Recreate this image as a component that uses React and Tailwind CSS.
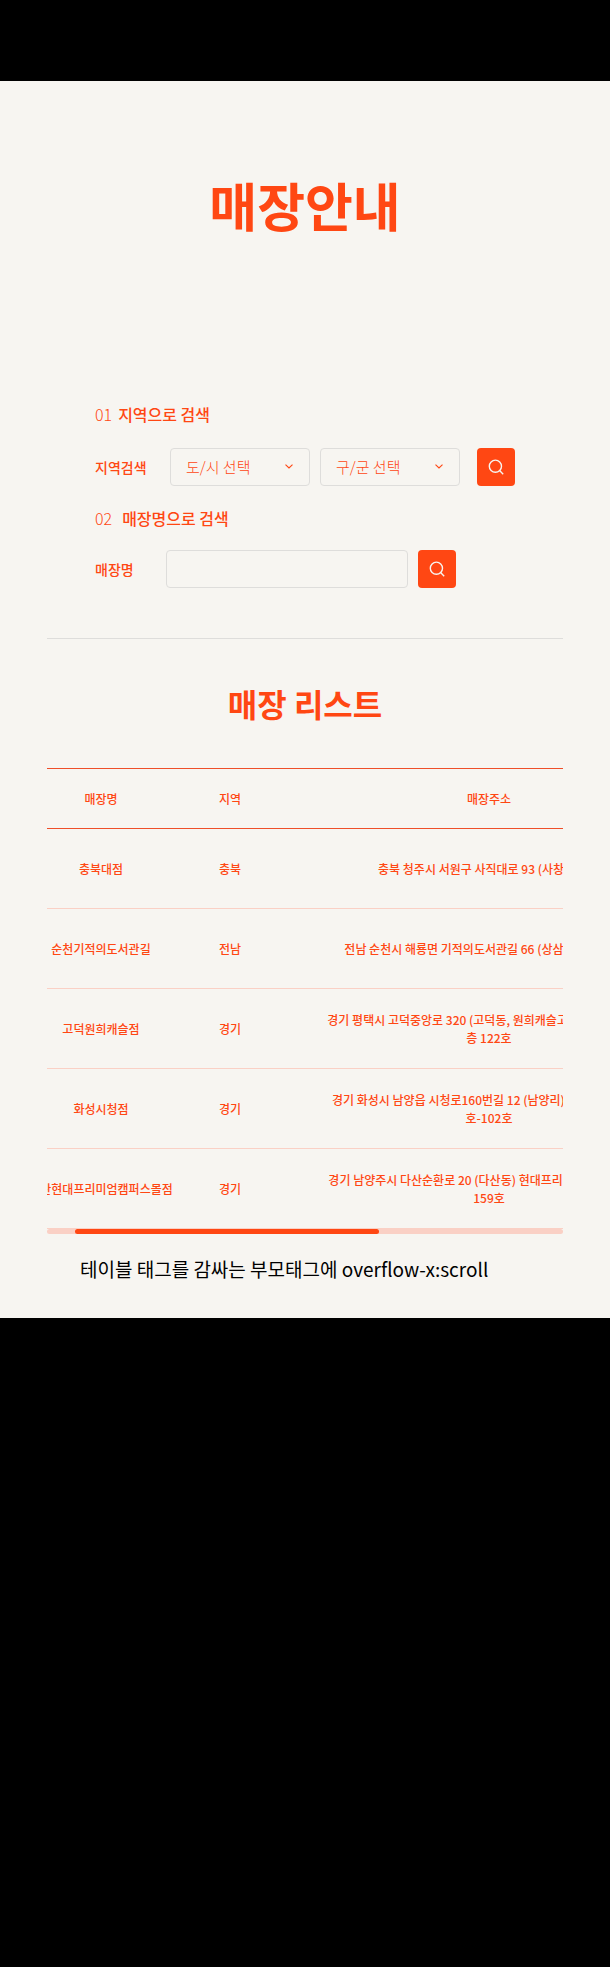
import { useLayoutEffect, useRef, useState } from "react";

const STORES = [
  { name: "충북대점", region: "충북", address: ["충북 청주시 서원구 사직대로 93 (사창동) 1층"], phone: "043-271-0093" },
  { name: "순천기적의도서관길", region: "전남", address: ["전남 순천시 해룡면 기적의도서관길 66 (상삼리) 1층 103호"], phone: "061-721-0066" },
  { name: "고덕원희캐슬점", region: "경기", address: ["경기 평택시 고덕중앙로 320 (고덕동, 원희캐슬고덕) 상가동 지상1", "층 122호"], phone: "031-611-0320" },
  { name: "화성시청점", region: "경기", address: ["경기 화성시 남양읍 시청로160번길 12 (남양리) 센트럴타워 101", "호-102호"], phone: "031-355-0160" },
  { name: "다산현대프리미엄캠퍼스몰점", region: "경기", address: ["경기 남양주시 다산순환로 20 (다산동) 현대프리미엄캠퍼스몰 1층", "159호"], phone: "031-555-0159" },
];

function SearchIcon() {
  return (
    <svg viewBox="0 0 16 16" className="size-4" fill="none" stroke="currentColor" strokeWidth="1.4" aria-hidden="true">
      <circle cx="7.4" cy="7.2" r="6.1" />
      <path d="M11.6 11.6 L15.2 15.2" />
    </svg>
  );
}

function SearchButton({ label }) {
  return (
    <button type="submit" aria-label={label} className="flex size-[38px] shrink-0 items-center justify-center rounded-[4px] bg-[#ff4713] text-[#f7f5f1]">
      <SearchIcon />
    </button>
  );
}

function Picker({ label, text }) {
  return (
    <div className="relative w-[140px]">
      <select aria-label={label} className="h-[38px] w-full appearance-none rounded-[4px] border border-[#dedddb] bg-transparent px-[15px] text-[15px] font-light">
        <option>{text}</option>
      </select>
      <svg viewBox="0 0 8 5" className="pointer-events-none absolute top-4 right-[17px] h-[5px] w-2" fill="none" stroke="currentColor" strokeWidth="1.1" aria-hidden="true">
        <path d="M0.5 0.6 L4 4 L7.5 0.6" />
      </svg>
    </div>
  );
}

function ScrollTable() {
  const box = useRef(null);
  const [bar, setBar] = useState({ left: 0, width: 100 });

  const update = () => {
    const el = box.current;
    setBar({ left: (el.scrollLeft / el.scrollWidth) * 100, width: (el.clientWidth / el.scrollWidth) * 100 });
  };

  useLayoutEffect(() => {
    box.current.scrollLeft = 48;
    update();
    window.addEventListener("resize", update);
    return () => window.removeEventListener("resize", update);
  }, []);

  const head = "h-[61px] border-y border-[#ee4f2a] font-medium";
  const cell = "h-20 border-b border-[#fad0c5]";

  return (
    <div>
      <div ref={box} onScroll={update} className="overflow-x-auto [scrollbar-width:none]">
        <table className="w-full min-w-[876px] table-fixed border-separate border-spacing-0 text-center text-xs leading-[18px] font-medium">
          <colgroup>
            <col className="w-[204px]" />
            <col className="w-[54px]" />
            <col className="w-[464px]" />
            <col />
          </colgroup>
          <thead>
            <tr>
              <th className={head}>매장명</th>
              <th className={head}>지역</th>
              <th className={head}>매장주소</th>
              <th className={head}>전화번호</th>
            </tr>
          </thead>
          <tbody>
            {STORES.map((s) => (
              <tr key={s.name}>
                <td className={cell}>{s.name}</td>
                <td className={cell}>{s.region}</td>
                <td className={cell}>
                  {s.address.map((line) => (
                    <span key={line} className="block">{line}</span>
                  ))}
                </td>
                <td className={cell}>{s.phone}</td>
              </tr>
            ))}
          </tbody>
        </table>
      </div>
      <div className="h-[5px] overflow-hidden rounded-full bg-[#fad0c5]">
        <div className="h-full rounded-full bg-[#ff4713]" style={{ marginLeft: `${bar.left}%`, width: `${bar.width}%` }} />
      </div>
    </div>
  );
}

export default function App() {
  const stop = (e) => e.preventDefault();
  return (
    <div className="min-h-screen bg-black pt-[81px] font-['Noto_Sans_CJK_KR',sans-serif]">
      <main className="bg-[#f7f5f1] px-[47px] pt-[88px] pb-[33px] text-[#ff4713]">
        <h1 className="text-center text-[52px] leading-[72px] font-bold">매장안내</h1>

        <section className="border-b border-[#dedddb] px-12 pt-[161px] pb-[50px]">
          <h2 className="flex gap-[6px] text-base leading-6 font-medium">
            <span className="font-light">01</span>지역으로 검색
          </h2>
          <form onSubmit={stop} className="mt-[22px] flex items-center">
            <span className="w-[75px] text-sm font-medium">지역검색</span>
            <div className="flex gap-[10px]">
              <Picker label="도/시" text="도/시 선택" />
              <Picker label="구/군" text="구/군 선택" />
            </div>
            <div className="ml-[17px]">
              <SearchButton label="지역으로 검색" />
            </div>
          </form>
          <h2 className="mt-5 flex gap-[10px] text-base leading-6 font-medium">
            <span className="font-light">02</span>매장명으로 검색
          </h2>
          <form onSubmit={stop} className="mt-5 flex items-center">
            <label htmlFor="store" className="w-[71px] text-sm font-medium">매장명</label>
            <input id="store" type="text" className="mr-[10px] h-[38px] w-[242px] rounded-[4px] border border-[#dedddb] bg-transparent px-3 text-sm" />
            <SearchButton label="매장명으로 검색" />
          </form>
        </section>

        <h2 className="pt-[41px] pb-[42px] text-center text-[32px] leading-[46px] font-bold">매장 리스트</h2>
        <ScrollTable />
        <p className="mt-[19px] pl-[33px] text-[19px] leading-8 text-black">테이블 태그를 감싸는 부모태그에 overflow-x:scroll</p>
      </main>
    </div>
  );
}
